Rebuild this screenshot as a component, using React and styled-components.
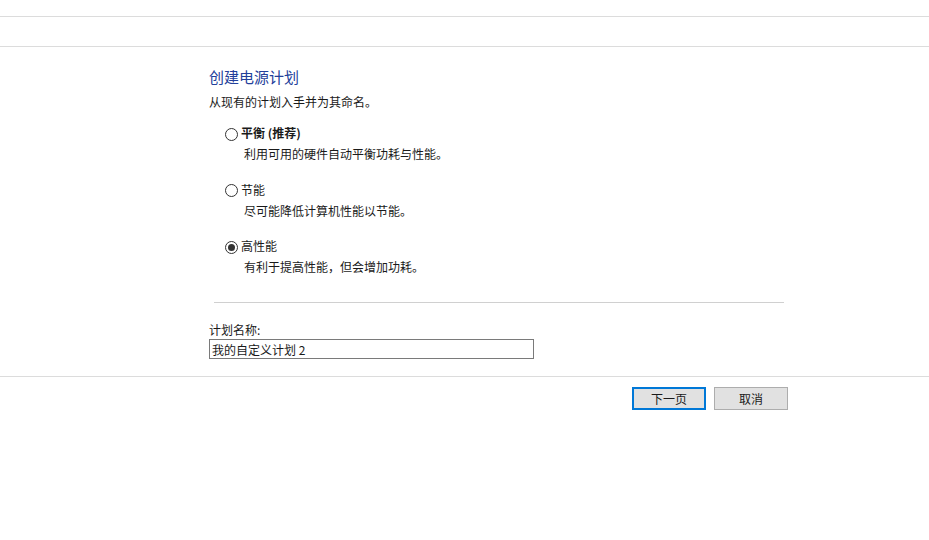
import React, { useState } from "react";
import styled, { createGlobalStyle } from "styled-components";

const GlobalStyle = createGlobalStyle`
  html, body {
    margin: 0;
    padding: 0;
    background: #ffffff;
  }
  body {
    font-family: "Noto Sans CJK SC", "Microsoft YaHei", "Liberation Sans", sans-serif;
    font-size: 12px;
    color: #1a1a1a;
  }
`;

const Page = styled.div`
  width: 929px;
  height: 540px;
  background: #fff;
`;

const Band = styled.div`
  height: ${(p) => p.h}px;
  border-bottom: 1px solid #dcdcdc;
`;

const Content = styled.div`
  padding: 21px 0 0 209px;
  display: flex;
  flex-direction: column;
`;

const Title = styled.h1`
  margin: 0;
  font-size: 15px;
  line-height: 18px;
  font-weight: normal;
  color: #23409a;
`;

const Lead = styled.p`
  margin: 8px 0 0;
  line-height: 16px;
`;

const Options = styled.div`
  margin: 15px 0 0 16px;
  display: flex;
  flex-direction: column;
  gap: 19.5px;
`;

const Option = styled.label`
  display: flex;
  flex-direction: column;
  gap: 5px;
  cursor: default;
`;

const OptionHead = styled.span`
  display: flex;
  align-items: center;
  gap: 3px;
  line-height: 16px;
  font-weight: ${(p) => (p.bold ? 700 : 400)};
`;

const Circle = styled.span`
  width: 11px;
  height: 11px;
  border: 1px solid #333;
  border-radius: 50%;
  background: #fff;
  display: flex;
  align-items: center;
  justify-content: center;
  margin-top: 2px;

  &::after {
    content: "";
    width: 7px;
    height: 7px;
    border-radius: 50%;
    background: #333;
    display: ${(p) => (p.checked ? "block" : "none")};
  }
`;

const Desc = styled.span`
  padding-left: 19px;
  line-height: 16px;
`;

const Divider = styled.div`
  margin: 27px 0 0 5px;
  width: 570px;
  border-top: 1px solid #d0d0d0;
`;

const FieldLabel = styled.div`
  margin-top: 19px;
  line-height: 16px;
`;

const NameInput = styled.input`
  margin-top: 1px;
  box-sizing: border-box;
  width: 325px;
  height: 20px;
  border: 1px solid #7a7a7a;
  padding: 0 2px;
  font: inherit;
  font-size: 12px;
  color: #1a1a1a;
  outline: none;
`;

const Footer = styled.div`
  margin-top: 17px;
  border-top: 1px solid #dcdcdc;
  display: flex;
  justify-content: flex-end;
  gap: 8px;
  padding: 10px 141px 0 0;
`;

const Button = styled.button`
  box-sizing: border-box;
  width: 74px;
  height: 23px;
  background: #e1e1e1;
  border: ${(p) => (p.primary ? "2px solid #0078d7" : "1px solid #adadad")};
  font: inherit;
  font-size: 12px;
  color: #1a1a1a;
  padding: 0;
`;

const plans = [
  { id: "balanced", name: "平衡 (推荐)", desc: "利用可用的硬件自动平衡功耗与性能。", bold: true },
  { id: "saver", name: "节能", desc: "尽可能降低计算机性能以节能。" },
  { id: "high", name: "高性能", desc: "有利于提高性能，但会增加功耗。" },
];

export default function App() {
  const [selected, setSelected] = useState("high");
  const [name, setName] = useState("我的自定义计划 2");

  return (
    <Page>
      <GlobalStyle />
      <Band h={16} />
      <Band h={29} />
      <Content>
        <Title>创建电源计划</Title>
        <Lead>从现有的计划入手并为其命名。</Lead>
        <Options>
          {plans.map((p) => (
            <Option key={p.id} onClick={() => setSelected(p.id)}>
              <OptionHead bold={p.bold}>
                <Circle checked={selected === p.id} />
                {p.name}
              </OptionHead>
              <Desc>{p.desc}</Desc>
            </Option>
          ))}
        </Options>
        <Divider />
        <FieldLabel>计划名称:</FieldLabel>
        <NameInput value={name} onChange={(e) => setName(e.target.value)} />
      </Content>
      <Footer>
        <Button primary>下一页</Button>
        <Button>取消</Button>
      </Footer>
    </Page>
  );
}
